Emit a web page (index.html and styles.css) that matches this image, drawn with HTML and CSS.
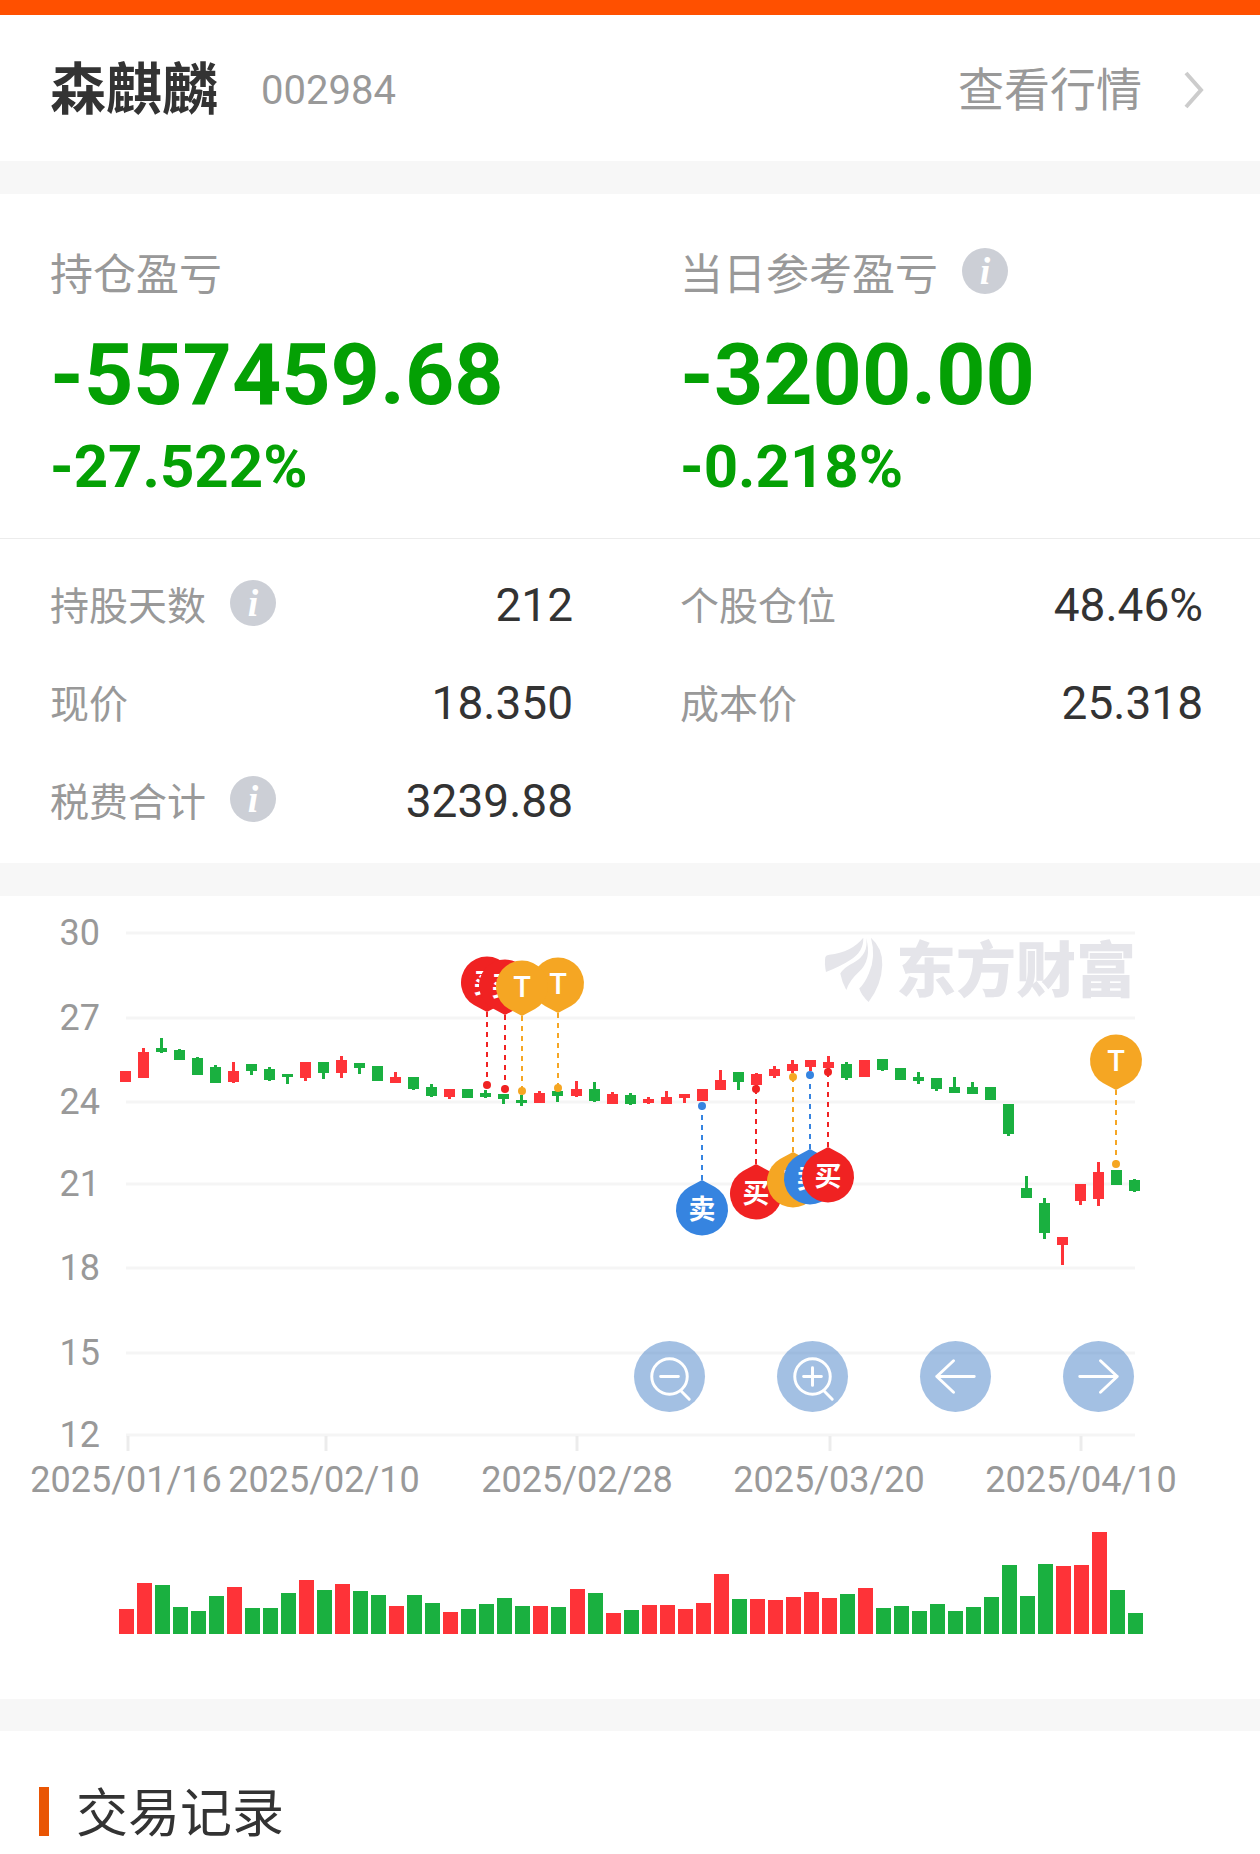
FILE: index.html
```html
<!DOCTYPE html>
<html lang="zh-CN">
<head>
<meta charset="UTF-8">
<meta name="viewport" content="width=device-width, initial-scale=1">
<title>森麒麟 002984</title>
<link rel="stylesheet" href="styles.css">
</head>
<body>
	<div class="topbar"></div>
	<header class="stock">
		<h1 class="stock-name">森麒麟</h1>
		<span class="stock-code">002984</span>
		<a class="stock-link" href="#">查看行情
			<svg class="chevron" viewBox="0 0 20 38"><path d="M2 2l15 17L2 36"/></svg>
		</a>
	</header>

	<section class="summary">
		<div class="summary-item">
			<div class="summary-label">持仓盈亏</div>
			<div class="amount">-557459.68</div>
			<div class="percent">-27.522%</div>
		</div>
		<div class="summary-item">
			<div class="summary-label">当日参考盈亏<button class="info" aria-label="说明">i</button></div>
			<div class="amount">-3200.00</div>
			<div class="percent">-0.218%</div>
		</div>
	</section>

	<dl class="details">
		<div class="detail"><dt>持股天数<button class="info" aria-label="说明">i</button></dt><dd>212</dd></div>
		<div class="detail"><dt>个股仓位</dt><dd>48.46%</dd></div>
		<div class="detail"><dt>现价</dt><dd>18.350</dd></div>
		<div class="detail"><dt>成本价</dt><dd>25.318</dd></div>
		<div class="detail"><dt>税费合计<button class="info" aria-label="说明">i</button></dt><dd>3239.88</dd></div>
	</dl>

	<section class="chart">
		<svg class="chart-canvas" id="chart" viewBox="0 0 1260 803">
			<g id="axes"></g>
			<g class="watermark">
				<g transform="translate(800 24) scale(0.333)">
					<path d="M78 156Q73 130 76 112Q78 105 88 104Q155 97 190 53Q192 94 152 119Q125 137 78 156Z"/>
					<path d="M198 53Q208 100 162 128Q132 143 121 161Q126 188 139 210Q150 180 175 158Q218 118 198 53Z"/>
					<path d="M213 53Q249 85 247 135Q245 195 206 246Q185 228 178 206Q195 190 207 160Q229 110 213 53Z"/>
				</g>
				<text x="896" y="96">东方财富</text>
			</g>
			<g id="candles"></g>
			<g id="pins"></g>
			<g id="volumes"></g>
		</svg>
		<div class="controls">
			<button class="control" aria-label="缩小">
				<svg viewBox="0 0 72 72"><circle cx="36" cy="36" r="18"/><path d="M27 36h18M48 51l8 8"/></svg>
			</button>
			<button class="control" aria-label="放大">
				<svg viewBox="0 0 72 72"><circle cx="36" cy="36" r="18"/><path d="M27 36h18M36 27v18M48 51l8 8"/></svg>
			</button>
			<button class="control" aria-label="左移">
				<svg viewBox="0 0 72 72"><path d="M55 36H17M34 20L17 36l17 16"/></svg>
			</button>
			<button class="control" aria-label="右移">
				<svg viewBox="0 0 72 72"><path d="M17 36h38M38 20l17 16-17 16"/></svg>
			</button>
		</div>
	</section>

	<section class="records">
		<h2 class="records-title">交易记录</h2>
	</section>
	<script src="chart.js"></script>
</body>
</html>
```

FILE: styles.css
```css
* {
	box-sizing: border-box;
}

body {
	margin: 0;
	background: #fff;
	color: #333;
	font-family: Roboto, "Noto Sans CJK SC", sans-serif;
}

h1, h2, dl, dd {
	margin: 0;
}

button {
	border: 0;
	padding: 0;
	cursor: pointer;
}

.topbar {
	height: 15px;
	background: #ff5000;
}

.stock {
	display: flex;
	align-items: center;
	height: 146px;
	padding: 4px 56px 0 50px;
}

.stock-name {
	font-size: 56px;
	line-height: 72px;
	font-weight: bold;
}

.stock-code {
	margin-left: 43px;
	font-size: 40px;
	color: #999;
}

.stock-link {
	display: flex;
	align-items: center;
	gap: 42px;
	margin-left: auto;
	font-size: 46px;
	line-height: 60px;
	color: #999;
	text-decoration: none;
}

.chevron {
	width: 20px;
	height: 38px;
	fill: none;
	stroke: #ccc;
	stroke-width: 4;
}

.summary {
	display: grid;
	grid-template-columns: 1fr 1fr;
	border-top: 33px solid #f7f7f7;
	border-bottom: 1px solid #ececec;
	padding: 53px 0 35px;
}

.summary-item {
	padding: 0 57px 0 50px;
}

.summary-label {
	display: flex;
	align-items: center;
	gap: 24px;
	height: 48px;
	font-size: 43px;
	color: #999;
}

.info {
	width: 46px;
	height: 46px;
	border-radius: 50%;
	background: #cccfd6;
	color: #fff;
	font: italic bold 38px/46px "Liberation Serif", serif;
	text-align: center;
}

.amount {
	margin-top: 30px;
	font-size: 86px;
	line-height: 100px;
	font-weight: bold;
	color: #04a004;
}

.percent {
	margin-top: 6px;
	font-size: 60px;
	line-height: 72px;
	font-weight: bold;
	color: #04a004;
}

.details {
	display: grid;
	grid-template-columns: 1fr 1fr;
	padding: 17px 0 13px;
}

.detail {
	display: flex;
	align-items: center;
	justify-content: space-between;
	height: 98px;
	padding: 0 57px 0 50px;
}

.detail dt {
	display: flex;
	align-items: center;
	gap: 24px;
	padding-bottom: 4px;
	font-size: 39px;
	color: #999;
}

.detail dd {
	font-size: 46px;
}

.chart {
	position: relative;
	border-top: 33px solid #f7f7f7;
	border-bottom: 32px solid #f7f7f7;
}

.chart-canvas {
	display: block;
	width: 100%;
}

.grid-line {
	stroke: #f5f5f5;
	stroke-width: 3;
}

.tick {
	stroke: #ececec;
	stroke-width: 3;
}

.axis-label {
	font-size: 36px;
	fill: #999;
}

.watermark {
	fill: #e5e5ea;
	font-size: 60px;
	font-weight: 900;
}

.up {
	fill: #fe3338;
}

.down {
	fill: #1ab040;
}

.pin-text {
	font-size: 27px;
	font-weight: bold;
	fill: #fff;
	text-anchor: middle;
}

.pin-letter {
	font-size: 29px;
	font-weight: 500;
}

/* sits over the lower right of the plot */
.controls {
	position: absolute;
	right: 10%;
	bottom: 287px;
	display: flex;
	gap: 72px;
}

.control {
	width: 71px;
	height: 71px;
	border-radius: 50%;
	background: rgba(71, 130, 199, 0.5);
}

.control svg {
	display: block;
	fill: none;
	stroke: #fff;
	stroke-width: 3;
	stroke-linecap: round;
	stroke-linejoin: round;
}

.records {
	padding: 56px 39px 18px;
}

.records-title {
	border-left: 10px solid #e95504;
	padding: 6px 0 0 27px;
	font-size: 52px;
	line-height: 43px;
	font-weight: normal;
}
```

FILE: chart.js
```js
var NS = "http://www.w3.org/2000/svg";
var FIRST_X = 126;
var STEP = 18.02;
var VOLUME_BASE = 738;

// [direction, body top, body bottom, wick top, wick bottom, volume]
var days = [
	["up", 175, 186, 175, 186, 25], ["up", 156, 182, 152, 182, 51], ["down", 152, 156, 142, 157, 49],
	["down", 154, 164, 153, 164, 27], ["down", 162, 179, 161, 179, 23], ["down", 171, 187, 169, 187, 38],
	["up", 175, 186, 166, 187, 47], ["down", 168, 175, 168, 179, 26], ["down", 173, 184, 171, 185, 26],
	["down", 178, 181, 178, 188, 41], ["up", 166, 182, 166, 185, 54], ["down", 166, 177, 166, 183, 44],
	["up", 164, 177, 160, 182, 50], ["down", 167, 172, 167, 178, 43], ["down", 170, 185, 170, 185, 39],
	["up", 181, 187, 176, 187, 28], ["down", 181, 193, 181, 194, 39], ["down", 191, 200, 188, 201, 31],
	["up", 193, 201, 193, 203, 22], ["down", 193, 202, 193, 202, 25], ["down", 197, 201, 194, 202, 30],
	["down", 198, 203, 198, 208, 36], ["down", 204, 207, 199, 210, 28], ["up", 197, 207, 195, 207, 28],
	["down", 195, 200, 194, 206, 27], ["up", 193, 200, 185, 201, 45], ["down", 193, 205, 186, 206, 41],
	["up", 198, 208, 196, 208, 21], ["down", 199, 208, 197, 209, 24], ["up", 203, 207, 201, 208, 29],
	["up", 201, 208, 195, 208, 29], ["up", 198, 202, 198, 207, 25], ["up", 193, 205, 193, 205, 31],
	["up", 184, 194, 174, 194, 60], ["down", 176, 186, 176, 194, 35], ["up", 178, 189, 177, 190, 35],
	["up", 173, 180, 170, 182, 34], ["up", 168, 175, 164, 177, 37], ["up", 164, 171, 164, 175, 42],
	["up", 166, 172, 160, 176, 36], ["down", 168, 182, 166, 184, 40], ["up", 164, 181, 164, 181, 46],
	["down", 163, 174, 163, 175, 26], ["down", 172, 184, 172, 184, 28], ["down", 181, 185, 176, 188, 23],
	["down", 182, 193, 182, 195, 30], ["down", 191, 197, 181, 197, 23], ["down", 191, 198, 186, 198, 27],
	["down", 191, 204, 191, 204, 37], ["down", 208, 238, 208, 240, 69], ["down", 292, 302, 280, 302, 38],
	["down", 307, 337, 302, 343, 70], ["up", 341, 349, 341, 369, 68], ["up", 288, 305, 288, 309, 69],
	["up", 276, 303, 266, 310, 102], ["down", 274, 289, 274, 289, 44], ["down", 284, 295, 283, 296, 21]
];

// tip is the pointed end of the bubble, dot is the traded price
var pins = [
	{ x: 487, tip: 116, dot: 189, text: "买", color: "#f02222" },
	{ x: 505, tip: 119, dot: 193, text: "买", color: "#f02222" },
	{ x: 558, tip: 117, dot: 192, text: "T", color: "#f5a623" },
	{ x: 522, tip: 120, dot: 195, text: "T", color: "#f5a623" },
	{ x: 702, tip: 284, dot: 210, text: "卖", color: "#3684e0" },
	{ x: 756, tip: 268, dot: 193, text: "买", color: "#f02222" },
	{ x: 793, tip: 256, dot: 181, text: "T", color: "#f5a623" },
	{ x: 810, tip: 253, dot: 179, text: "卖", color: "#3684e0" },
	{ x: 828, tip: 251, dot: 176, text: "买", color: "#f02222" },
	{ x: 1116, tip: 194, dot: 268, text: "T", color: "#f5a623" }
];

var levels = [[30, 37], [27, 122], [24, 206], [21, 288], [18, 372], [15, 457], [12, 539]];
var dates = [
	["2025/01/16", 126, 128], ["2025/02/10", 324, 326], ["2025/02/28", 577, 577],
	["2025/03/20", 829, 830], ["2025/04/10", 1081, 1081]
];

function add(parent, name, attrs, text) {
	var e = document.createElementNS(NS, name);
	for (var key in attrs)
		e.setAttribute(key, attrs[key]);
	if (text)
		e.textContent = text;
	parent.appendChild(e);
}

var axes = document.getElementById("axes");
levels.forEach(function(l) {
	add(axes, "line", { x1: 126, x2: 1135, y1: l[1], y2: l[1], "class": "grid-line" });
	add(axes, "text", { x: 100, y: l[1] + 12, "text-anchor": "end", "class": "axis-label" }, l[0]);
});
dates.forEach(function(d) {
	add(axes, "line", { x1: d[2], x2: d[2], y1: 540, y2: 555, "class": "tick" });
	add(axes, "text", { x: d[1], y: 596, "text-anchor": "middle", "class": "axis-label" }, d[0]);
});

var candles = document.getElementById("candles");
var volumes = document.getElementById("volumes");
days.forEach(function(d, i) {
	var x = Math.round(FIRST_X + i * STEP);
	add(candles, "rect", { x: x - 6, y: d[1], width: 11, height: d[2] - d[1], "class": d[0] });
	add(candles, "rect", { x: x - 2, y: d[3], width: 3, height: d[4] - d[3], "class": d[0] });
	add(volumes, "rect", { x: x - 7, y: VOLUME_BASE - d[5], width: 15, height: d[5], "class": d[0] });
});

var pinLayer = document.getElementById("pins");
pins.forEach(function(p) {
	add(pinLayer, "line", { x1: p.x, x2: p.x, y1: p.tip, y2: p.dot, stroke: p.color, "stroke-width": 2, "stroke-dasharray": "5 5" });
	add(pinLayer, "circle", { cx: p.x, cy: p.dot, r: 4, fill: p.color });
});
pins.forEach(function(p) {
	// s is -1 when the bubble hangs over the candles, 1 when it is below them
	var s = p.dot > p.tip ? -1 : 1;
	var cy = p.tip + s * 29;
	var d = "M" + p.x + " " + p.tip + "L" + (p.x + 13) + " " + (cy - s * 22)
		+ "A26 26 0 1 " + (s > 0 ? 1 : 0) + " " + (p.x - 13) + " " + (cy - s * 22) + "Z";
	add(pinLayer, "path", { d: d, fill: p.color });
	add(pinLayer, "text", { x: p.x, y: cy + 10, "class": p.text == "T" ? "pin-text pin-letter" : "pin-text" }, p.text);
});
```
